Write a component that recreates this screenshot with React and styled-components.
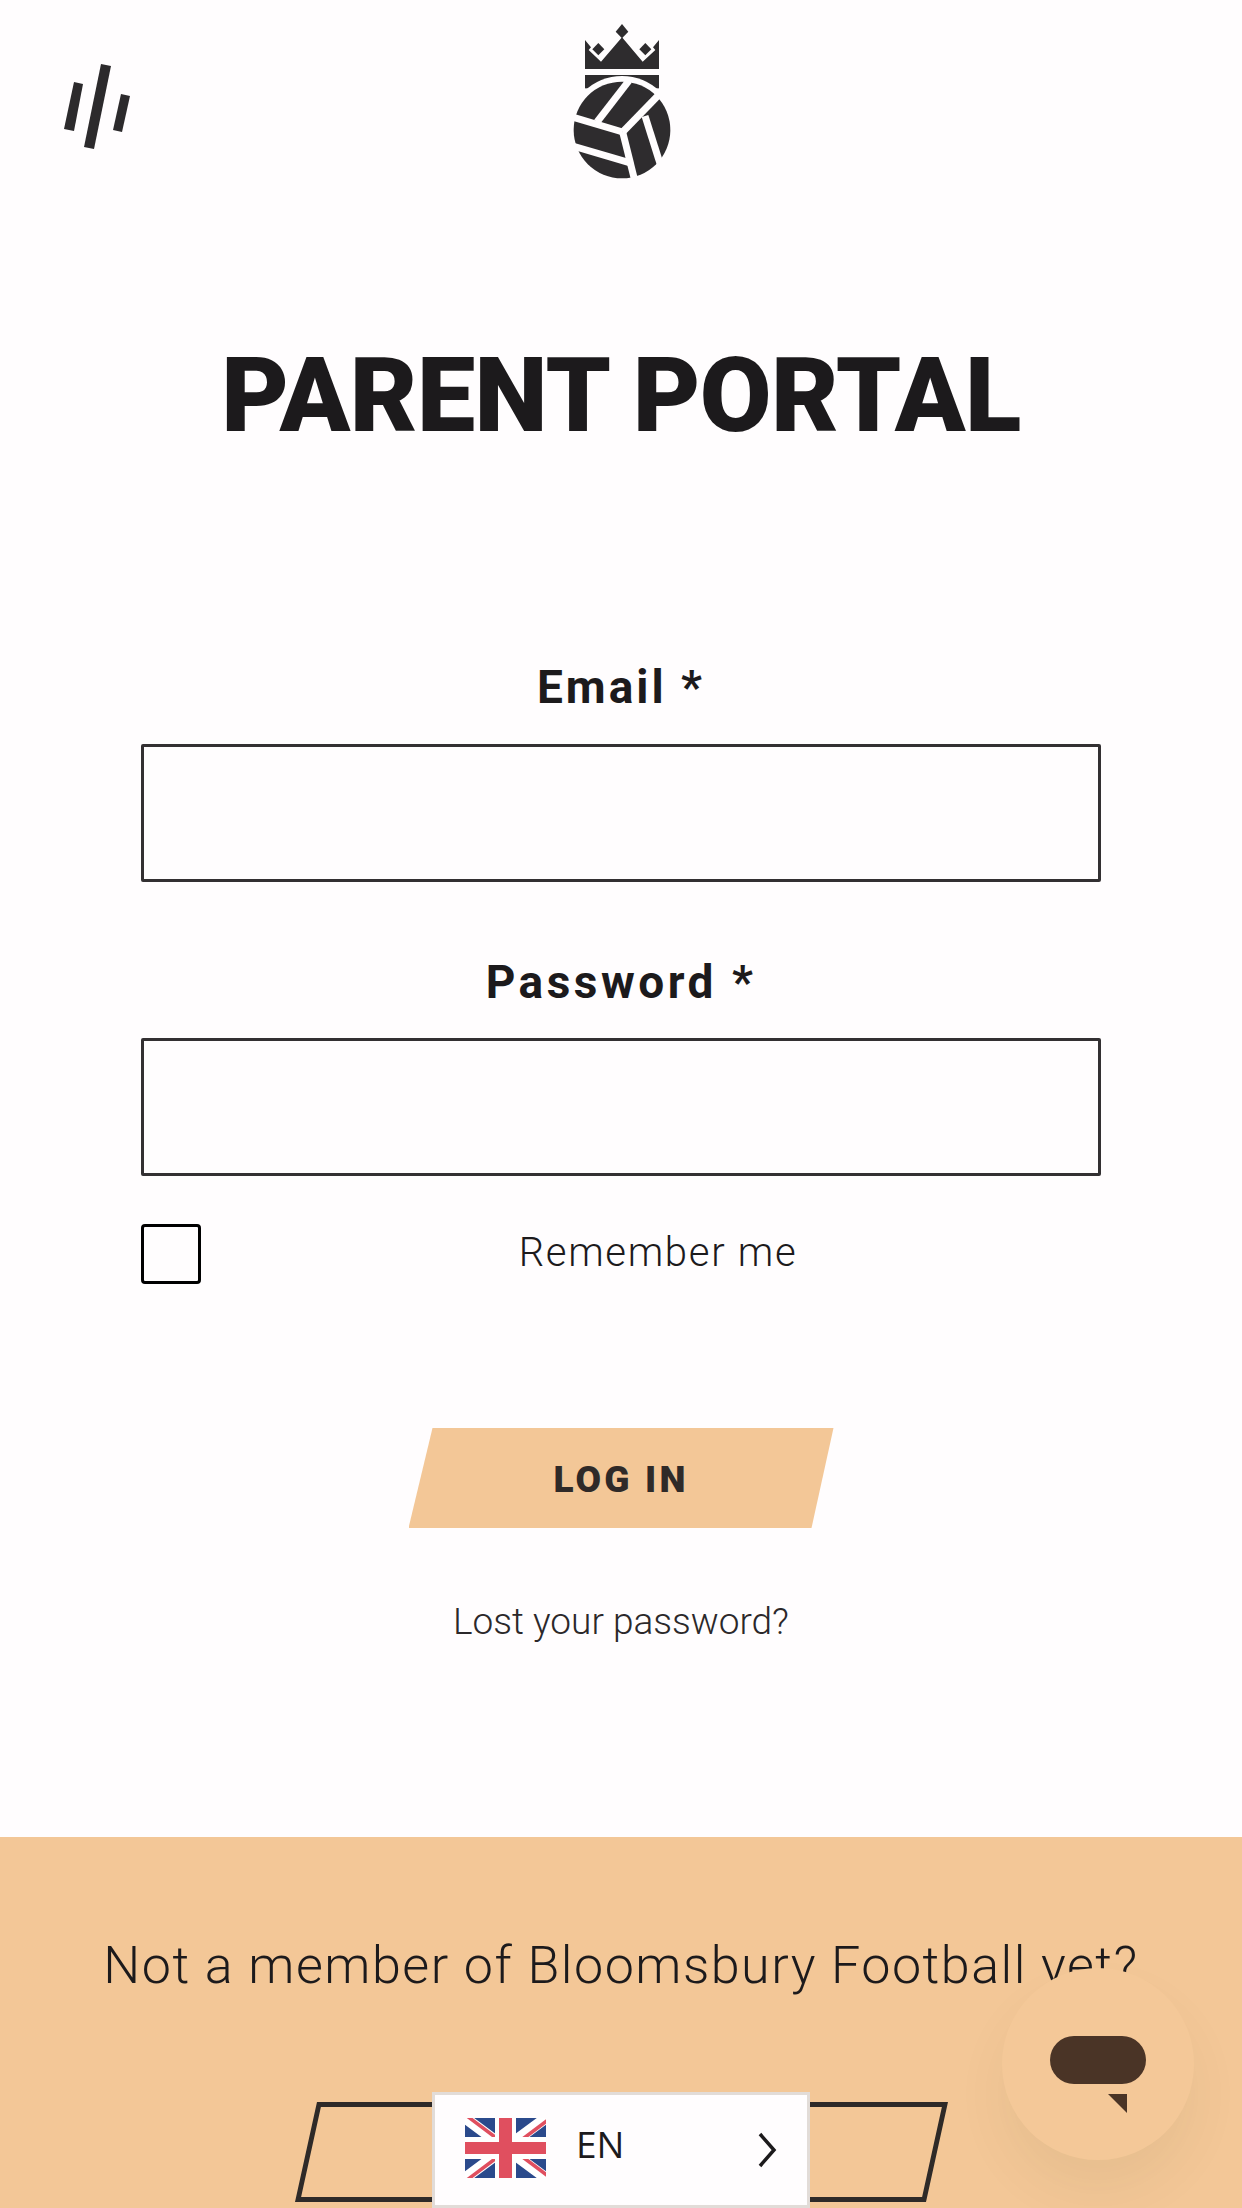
import React from "react";
import styled, { createGlobalStyle } from "styled-components";

const Global = createGlobalStyle`
  html, body { margin: 0; padding: 0; background: #fffdfe; }
  * { box-sizing: border-box; }
`;

const Page = styled.div`
  position: relative;
  width: 1242px;
  height: 2208px;
  overflow: hidden;
  background: #fffdfe;
  font-family: Roboto, "Liberation Sans", sans-serif;
  color: #1c1a1c;
`;

const Header = styled.header`
  display: grid;
  grid-template-columns: 1fr auto 1fr;
  height: 190px;
  padding-top: 10px;
`;

const MenuButton = styled.button`
  justify-self: start;
  align-self: start;
  display: block;
  margin: 50px 0 0 60px;
  padding: 0;
  border: 0;
  background: none;
  line-height: 0;
`;

const Title = styled.h1`
  margin: 154px 0 0;
  font-size: 104px;
  line-height: 104px;
  font-weight: 900;
  text-align: center;
  letter-spacing: -0.6px;
  text-transform: uppercase;
`;

const Form = styled.form`
  display: flex;
  flex-direction: column;
  padding: 0 141px;
  margin-top: 216px;
`;

const Label = styled.label`
  display: block;
  height: 46px;
  margin: ${(p) => p.$top}px 0 ${(p) => p.$bottom}px;
  font-size: 46px;
  line-height: 46px;
  font-weight: 700;
  letter-spacing: ${(p) => p.$spacing}px;
  text-align: center;
`;

const Input = styled.input`
  display: block;
  width: 100%;
  height: 138px;
  border: 3px solid #333032;
  border-radius: 2px;
  background: transparent;
  outline: none;
`;

const RememberRow = styled.div`
  display: flex;
  align-items: center;
  margin-top: 48px;
`;

const Check = styled.input`
  appearance: none;
  flex: none;
  width: 60px;
  height: 60px;
  margin: 0;
  border: 3px solid #000;
  border-radius: 4px;
  background: transparent;
`;

const RememberText = styled.span`
  flex: 1;
  margin-top: -3px;
  font-size: 40px;
  line-height: 40px;
  font-weight: 300;
  letter-spacing: 1.7px;
  text-align: center;
  padding-left: 14px;
`;

const LoginButton = styled.button`
  display: block;
  align-self: center;
  width: 425px;
  height: 100px;
  margin-top: 144px;
  border: 0;
  background: #f3c797;
  clip-path: polygon(24px 0, 100% 0, calc(100% - 22px) 100%, 0 100%);
  color: #2f2a28;
  font-family: inherit;
  font-size: 37px;
  font-weight: 900;
  letter-spacing: 3.2px;
  padding: 2px 0 0;
`;

const LostLink = styled.a`
  display: block;
  margin-top: 75px;
  font-size: 37px;
  line-height: 37px;
  font-weight: 300;
  letter-spacing: 0;
  text-align: center;
  color: #2b282a;
`;

const Footer = styled.section`
  height: 371px;
  margin-top: 197px;
  background: #f3c797;
  padding-top: 103px;
`;

const FooterText = styled.p`
  margin: 0;
  font-size: 52px;
  line-height: 52px;
  font-weight: 300;
  letter-spacing: 1.5px;
  text-align: center;
  color: #1c1a1c;
`;

const JoinButton = styled.a`
  display: block;
  width: 631px;
  height: 100px;
  margin: 110px 0 0 306px;
  border: 5px solid #2e2a28;
  transform: skewX(-12.4deg);
`;

const LanguageBox = styled.div`
  position: absolute;
  left: 432px;
  bottom: 0;
  width: 378px;
  height: 116px;
  display: flex;
  align-items: flex-start;
  padding: 23px 30px 0 30px;
  background: #fffdfe;
  border: 3px solid #e2dcd8;
`;

const Flag = styled.svg`
  flex: none;
`;

const LangCode = styled.span`
  margin: 3px 0 0 30px;
  font-family: "Open Sans", sans-serif;
  font-size: 37px;
  font-weight: 400;
  line-height: 46px;
  color: #1c1a1c;
`;

const Chevron = styled.svg`
  margin: 14px 0 0 auto;
`;

const ChatButton = styled.div`
  position: absolute;
  right: 48px;
  bottom: 48px;
  width: 192px;
  height: 192px;
  border-radius: 50%;
  background: #f4c898;
  box-shadow: 0 30px 50px rgba(90, 80, 40, 0.07);
  display: flex;
  justify-content: center;
`;

const Bubble = styled.svg`
  margin-top: 68px;
`;

const MenuIcon = () => (
  <svg width="80" height="100" viewBox="60 60 80 100">
    <g fill="#2c2a2c">
      <polygon points="74,82 83,84 74,131 64,129" />
      <polygon points="101,64 111,66 94,149 84,147" />
      <polygon points="121,94 130,96 122,132 113,130" />
    </g>
  </svg>
);

const Logo = () => (
  <svg width="160" height="180" viewBox="0 0 480 540">
    <g fill="#2e2c2e">
      <polygon points="243,42 262,65 243,85 224,65" />
      <polygon points="172,99 190,118 172,136 154,118" />
      <polygon points="313,99 331,118 313,136 295,118" />
      <polygon points="132,90 150,112 143,120 180,155 243,82 305,155 343,120 336,112 354,90 354,177 132,177" />
      <rect x="132" y="195" width="222" height="40" />
    </g>
    <circle cx="243" cy="360" r="162" fill="#fffdfe" />
    <circle cx="243" cy="360" r="145" fill="#2e2c2e" />
    <g stroke="#fffdfe" strokeWidth="21" fill="none">
      <line x1="264" y1="212" x2="168" y2="336" />
      <line x1="90" y1="320" x2="245" y2="366" />
      <line x1="350" y1="258" x2="245" y2="366" />
      <line x1="245" y1="366" x2="282" y2="515" />
      <line x1="312" y1="318" x2="360" y2="470" />
      <line x1="95" y1="408" x2="265" y2="458" />
    </g>
  </svg>
);

const UkFlag = () => (
  <Flag width="81" height="60" viewBox="0 0 81 60">
    <rect width="81" height="60" fill="#2b4a8c" />
    <path d="M0 0 L81 60 M81 0 L0 60" stroke="#fff" strokeWidth="11" />
    <path d="M0 0 L40 30 M41 30 L81 60" stroke="#e04f5f" strokeWidth="3.5" transform="translate(2,-2)" />
    <path d="M81 0 L41 30 M40 30 L0 60" stroke="#e04f5f" strokeWidth="3.5" transform="translate(2,2)" />
    <rect x="30" width="21" height="60" fill="#fff" />
    <rect y="19" width="81" height="22" fill="#fff" />
    <rect x="34" width="13" height="60" fill="#e04f5f" />
    <rect y="24" width="81" height="12" fill="#e04f5f" />
  </Flag>
);

export default function App() {
  return (
    <Page>
      <Global />
      <Header>
        <MenuButton type="button" aria-label="Menu">
          <MenuIcon />
        </MenuButton>
        <Logo />
      </Header>
      <Title>Parent Portal</Title>
      <Form onSubmit={(e) => e.preventDefault()}>
        <Label $top={0} $bottom={34} $spacing={3}>Email *</Label>
        <Input type="email" />
        <Label $top={77} $bottom={33} $spacing={3.5}>Password *</Label>
        <Input type="password" />
        <RememberRow>
          <Check type="checkbox" />
          <RememberText>Remember me</RememberText>
        </RememberRow>
        <LoginButton type="submit">LOG IN</LoginButton>
        <LostLink>Lost your password?</LostLink>
      </Form>
      <Footer>
        <FooterText>Not a member of Bloomsbury Football yet?</FooterText>
        <JoinButton />
      </Footer>
      <ChatButton>
        <Bubble width="96" height="78" viewBox="0 0 96 78">
          <rect width="96" height="48" rx="24" fill="#4a3426" />
          <polygon points="58,58 77,58 77,77" fill="#4a3426" />
        </Bubble>
      </ChatButton>
      <LanguageBox>
        <UkFlag />
        <LangCode>EN</LangCode>
        <Chevron width="20" height="36" viewBox="0 0 20 36">
          <polyline points="3,2 17,18 3,34" fill="none" stroke="#1c1a1c" strokeWidth="3.5" />
        </Chevron>
      </LanguageBox>
    </Page>
  );
}
